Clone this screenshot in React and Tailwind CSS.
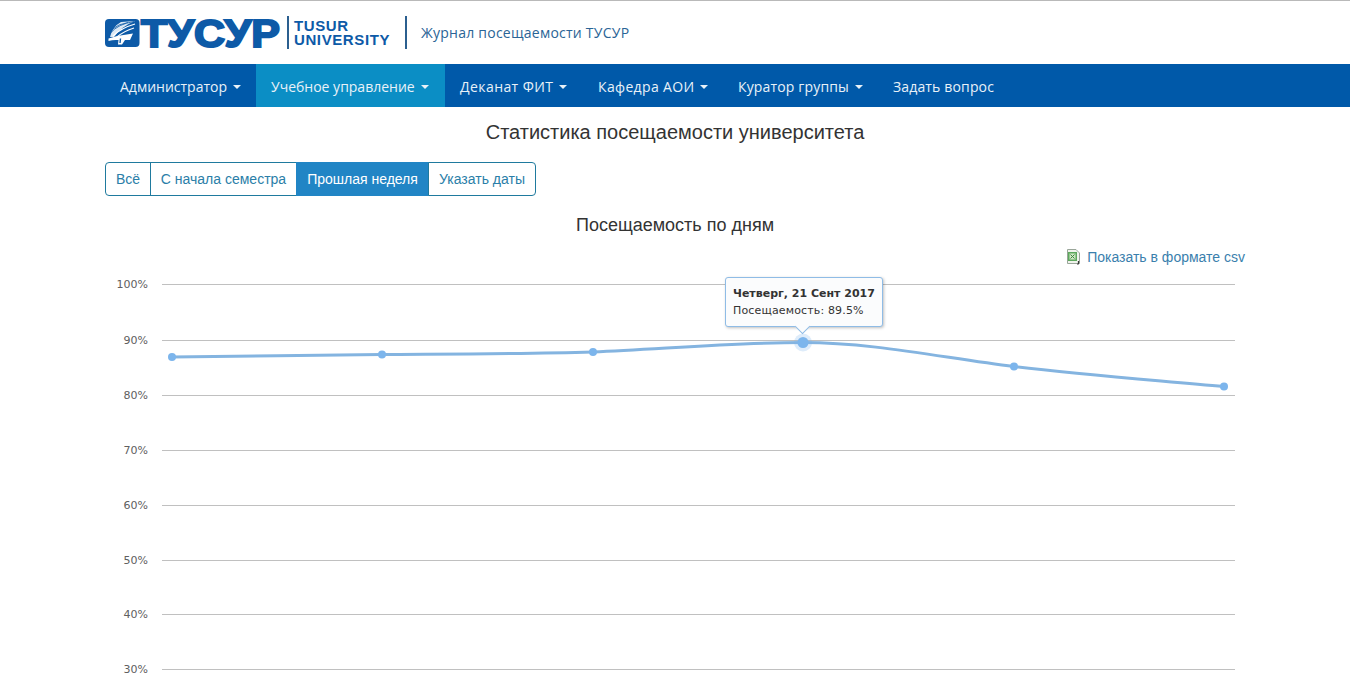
const menu = [
  { title: "Администратор", caret: true, w: "w-[151px]", track: "" },
  { title: "Учебное управление", caret: true, active: true, w: "w-[189px]", track: "" },
  { title: "Деканат ФИТ", caret: true, w: "w-[138px]", track: "tracking-[0.42px]" },
  { title: "Кафедра АОИ", caret: true, w: "w-[140px]", track: "tracking-[0.35px]" },
  { title: "Куратор группы", caret: true, w: "w-[155px]", track: "tracking-[0.15px]" },
  { title: "Задать вопрос", w: "w-[132px]", track: "tracking-[0.15px]" },
];

const ranges = [
  { title: "Всё", w: "w-[46px]" },
  { title: "С начала семестра", w: "w-[147px]" },
  { title: "Прошлая неделя", w: "w-[133px]", active: true },
  { title: "Указать даты", w: "w-[108px]" },
];

const ticks = [
  { label: "100%", y: 284.5 },
  { label: "90%", y: 340.5 },
  { label: "80%", y: 395.5 },
  { label: "70%", y: 450.5 },
  { label: "60%", y: 505.5 },
  { label: "50%", y: 560.5 },
  { label: "40%", y: 614.5 },
  { label: "30%", y: 669.5 },
];

const points = [
  [172, 357],
  [382, 354.5],
  [593, 352],
  [1014, 366.5],
  [1224, 386.5],
];

const Logo = () => (
  <svg width="180" height="60" viewBox="105 3 180 60" className="shrink-0">
    <rect x="105" y="19" width="34.500" height="28" rx="4" fill="#0d5aa7" />
    <path d="M110 37Q112 27 121 22L135 21Q122 26 114 37Z" fill="#dce8f3" />
    <path d="M110.500 33Q118 24 134 21.500" stroke="#0d5aa7" strokeWidth="0.800" fill="none" />
    <path d="M111 30Q119 23.500 128 22.500" stroke="#0d5aa7" strokeWidth="0.800" fill="none" />
    <path d="M113 36Q121 28 135 24" stroke="#fff" strokeWidth="1.200" fill="none" />
    <path d="M117 37Q124 31 134 28" stroke="#fff" strokeWidth="1.200" fill="none" />
    <path
      d="M108.500 38.500Q120 35 133 33.500L130 40L125 40L122 44.500H118L118.500 40Q113 39.500 108.500 41Z"
      fill="#fff"
    />
    <path d="M120.500 38.500L120 43" stroke="#0d5aa7" strokeWidth="1.400" />
    <text
      x="141"
      y="46.500"
      textLength="139"
      lengthAdjust="spacingAndGlyphs"
      fontFamily="'Liberation Sans', sans-serif"
      fontWeight="700"
      fontSize="38"
      fill="#0d5aa7"
      stroke="#0d5aa7"
      strokeWidth="2"
    >
      ТУСУР
    </text>
  </svg>
);

const ExcelIcon = () => (
  <svg width="15" height="16" viewBox="0 0 15 16" className="shrink-0">
    <path d="M1.500 .5H10L13.500 4V14.500H1.500Z" fill="#f0f3ec" stroke="#9aa69a" />
    <rect x="2" y="3" width="9" height="9" fill="#5da85d" />
    <rect x="3.500" y="4.500" width="6" height="6" fill="#cfe5c4" />
    <path d="M4.500 5.500L8.500 9.500M8.500 5.500L4.500 9.500" stroke="#3f8a3f" strokeWidth="1" />
    <path d="M12.500 12V14.500L11.500 15.500" stroke="#3a3a3a" strokeWidth="1.200" fill="none" />
  </svg>
);

const Chart = () => (
  <div className="relative h-[428px]">
    <svg width="1140" height="428" viewBox="105 270 1140 428" className="block">
      {ticks.map((tick) => (
        <g key={tick.label}>
          <line x1="162" x2="1235" y1={tick.y} y2={tick.y} stroke="#c0c0c0" strokeWidth="1" />
          <text
            x="148"
            y={tick.y + 3.5}
            textAnchor="end"
            fontFamily="'DejaVu Sans', sans-serif"
            fontSize="11"
            fill="#606060"
          >
            {tick.label}
          </text>
        </g>
      ))}
      <path
        d="M172 357C242 356 312 355.500 382 354.500C452 354 523 354 593 352C663 349 733 342.500 803 342.500C873 342.500 944 358 1014 366.500C1084 375 1154 380 1224 386.500"
        fill="none"
        stroke="#84b4e0"
        strokeWidth="3"
      />
      {points.map(([x, y]) => (
        <circle key={x} cx={x} cy={y} r="4" fill="#7cb5ec" />
      ))}
      <circle cx="803" cy="342.500" r="9" fill="#7cb5ec" fillOpacity="0.25" />
      <circle cx="803" cy="342.500" r="5.500" fill="#7cb5ec" />
    </svg>
    <div className="absolute left-[620px] top-[7px] h-[50px] w-[158px] rounded-[3px] border border-[#8fbce6] bg-[#fbfcfd] px-[7px] pt-[7px] font-['DejaVu_Sans',sans-serif] text-[11px] leading-[17px] text-[#333333] shadow-[1px_1px_3px_rgba(0,0,0,0.25)]">
      <div className="font-bold whitespace-nowrap">Четверг, 21 Сент 2017</div>
      <div className="tracking-[0.15px] whitespace-nowrap">Посещаемость: 89.5%</div>
      <div className="absolute bottom-[-6px] left-[71px] size-[11px] rotate-45 border-r border-b border-[#8fbce6] bg-[#fbfcfd]"></div>
    </div>
  </div>
);

const App = () => {
  return (
    <div className="h-[698px] overflow-hidden bg-white font-['Liberation_Sans',sans-serif] text-[#333333]">
      <div className="flex h-16 items-center border-t border-[#b9b9b9] pl-[105px]">
        <Logo />
        <div className="ml-[2px] flex h-[33px] flex-col justify-center border-l-2 border-[#2b5f8f] pl-[5px] text-[15px] leading-[14px] font-bold tracking-[0.6px] text-[#0d5aa7]">
          <span>TUSUR</span>
          <span>UNIVERSITY</span>
        </div>
        <div className="ml-[15px] flex h-[33px] items-center border-l-2 border-[#2b5f8f] pl-[14px] font-['Open_Sans',sans-serif] text-sm tracking-[0.24px] text-[#2a6496]">
          Журнал посещаемости ТУСУР
        </div>
      </div>
      <nav className="flex h-[43px] bg-[#0059a9] pl-[105px] font-['Open_Sans',sans-serif] text-sm text-[#e8f1f8]">
        {menu.map((item) => (
          <div
            key={item.title}
            className={
              item.w +
              " " +
              item.track +
              (item.active ? " bg-[#0b8ec5]" : "") +
              " flex items-center px-[15px] pt-[2px] whitespace-nowrap"
            }
          >
            {item.title}
            {item.caret && (
              <span className="ml-[6px] h-0 w-0 border-x-4 border-t-4 border-x-transparent border-t-[#e8f1f8]"></span>
            )}
          </div>
        ))}
      </nav>
      <div className="mx-[105px]">
        <h1 className="mt-[12px] text-center text-[20px] leading-[26px] text-[#333333]">
          Статистика посещаемости университета
        </h1>
        <div className="mt-[17px] flex h-[34px] w-[431px] text-sm">
          {ranges.map((range, i) => (
            <div
              key={range.title}
              className={
                (range.active
                  ? "bg-[#2185c5] text-white border-[#2185c5] "
                  : "bg-white text-[#2a7ea8] border-[#1f7a9e] ") +
                range.w +
                (i === 0 ? " rounded-l-[4px]" : " -ml-px") +
                (i === ranges.length - 1 ? " rounded-r-[4px]" : "") +
                " flex shrink-0 items-center justify-center border whitespace-nowrap"
              }
            >
              {range.title}
            </div>
          ))}
        </div>
        <h2 className="mt-[17px] text-center text-[18px] leading-[24px] text-[#333333]">
          Посещаемость по дням
        </h2>
        <div className="mt-[10px] mb-[3px] flex h-[20px] items-center justify-end gap-[6px] text-sm text-[#3a80ad]">
          <ExcelIcon />
          Показать в формате csv
        </div>
        <Chart />
      </div>
    </div>
  );
};

export default App;
